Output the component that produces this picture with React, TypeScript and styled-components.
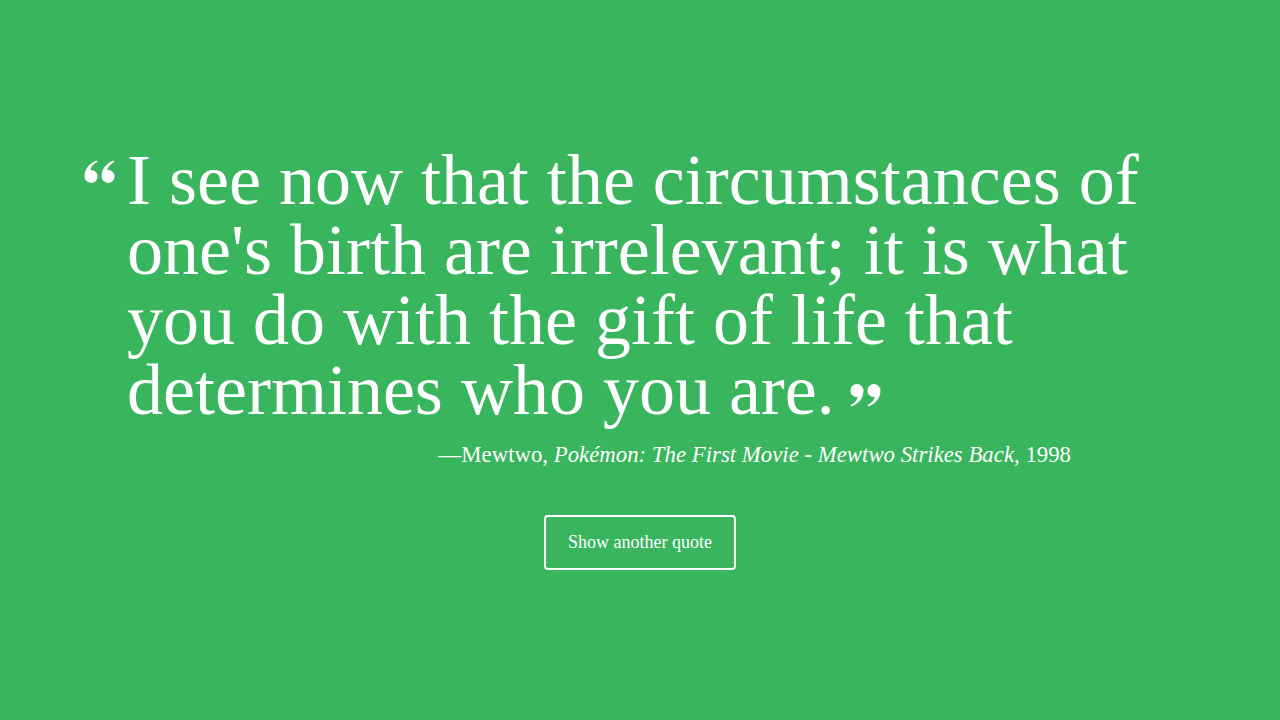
import React from "react";
import styled, { createGlobalStyle } from "styled-components";

const GlobalStyle = createGlobalStyle`
  html, body {
    margin: 0;
    padding: 0;
    background: #38b55d;
  }
  body {
    font-family: "Liberation Serif", "Times New Roman", serif;
    color: #ffffff;
  }
`;

const Page = styled.main`
  width: 1280px;
  height: 720px;
  background: #38b55d;
  display: flex;
  flex-direction: column;
  padding-top: 145px;
  box-sizing: border-box;
`;

const QuoteRow = styled.div`
  display: flex;
  align-items: flex-start;
  padding-left: 84px;
`;

const OpenMark = styled.span`
  display: block;
  width: 31px;
  height: 23px;
  margin-top: 15px;
  margin-right: 12px;
  flex: none;
`;

const QuoteText = styled.blockquote`
  margin: 0;
  width: 1060px;
  font-family: "Liberation Serif", "Times New Roman", serif;
  font-size: 72px;
  line-height: 70px;
  color: #ffffff;
`;

const CloseMark = styled.span`
  display: inline-block;
  width: 31px;
  height: 24px;
  margin-left: 15px;
  vertical-align: 6px;
`;

const Attribution = styled.p`
  margin: 15px 0 0 0;
  width: 1071px;
  text-align: right;
  font-size: 22.8px;
  line-height: 30px;
  color: #ffffff;

  cite {
    font-style: italic;
  }
`;

const ButtonRow = styled.div`
  display: flex;
  justify-content: center;
  margin-top: 45px;
`;

const QuoteButton = styled.button`
  height: 55px;
  padding: 0 22px;
  background: transparent;
  border: 2px solid #ffffff;
  border-radius: 4px;
  color: #ffffff;
  font-family: "Liberation Serif", "Times New Roman", serif;
  font-size: 18px;
  cursor: pointer;
`;

const MarkPath =
  "M0.6 16 C0.6 9 5 3.5 12.5 0.5 L13.3 2 C9 4.2 6.6 7.2 6.3 10 A6.5 6.5 0 1 1 0.6 16 Z";

const QuoteMarks: React.FC<{ flip?: boolean }> = ({ flip }) => (
  <svg width="31" height="23" viewBox="0 0 31 23" style={{ display: "block" }}>
    <g transform={flip ? "rotate(180 15.5 11.5)" : undefined} fill="#ffffff">
      <path d={MarkPath} />
      <path d={MarkPath} transform="translate(17 0)" />
    </g>
  </svg>
);

export default function App() {
  return (
    <>
      <GlobalStyle />
      <Page>
        <QuoteRow>
          <OpenMark>
            <QuoteMarks />
          </OpenMark>
          <QuoteText>
            I see now that the circumstances of one's birth are irrelevant; it is what
            you do with the gift of life that determines who you are.
            <CloseMark>
              <QuoteMarks flip />
            </CloseMark>
          </QuoteText>
        </QuoteRow>
        <Attribution>
          —Mewtwo, <cite>Pokémon: The First Movie - Mewtwo Strikes Back</cite>, 1998
        </Attribution>
        <ButtonRow>
          <QuoteButton>Show another quote</QuoteButton>
        </ButtonRow>
      </Page>
    </>
  );
}
